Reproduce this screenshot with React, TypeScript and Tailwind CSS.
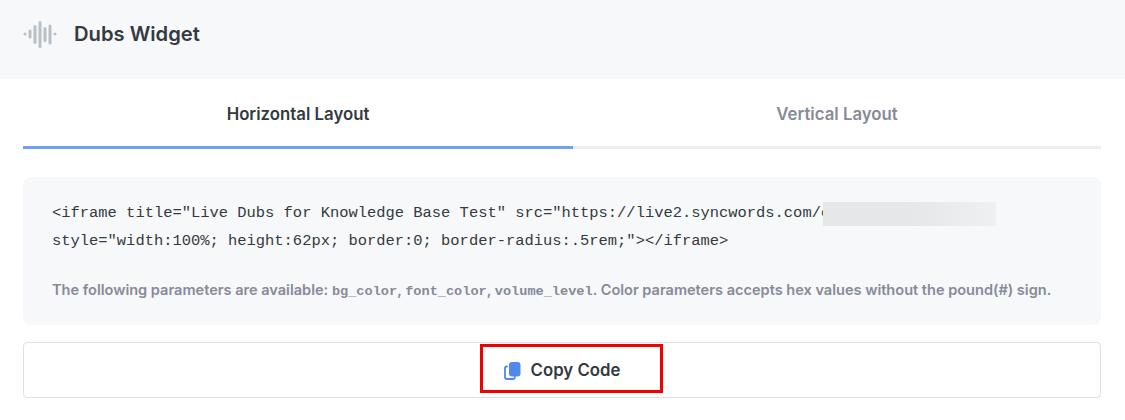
export default function App() {
  return (
    <div className="relative h-[420px] w-[1125px] overflow-hidden bg-white font-['Inter',sans-serif]">
      <header className="flex h-[79px] items-center gap-[17px] bg-[#f7f8fa] pb-[12px] pl-[23px]">
        <svg width="34" height="28" viewBox="0 0 34 28" fill="none" stroke="#b8bfc7" strokeWidth="3" strokeLinecap="round">
          <path d="M2 14v.1M7 11v6M12 6.500v16M17 2.500v24M22 8.500v12M27 6v17M32 14v.1" />
        </svg>
        <h1 className="text-[20.2px] font-semibold leading-7 text-[#343a40]">Dubs Widget</h1>
      </header>
      <main className="ml-[23px] w-[1078px]">
        <div className="grid h-[70px] grid-cols-[550px_1fr]">
          <div className="flex items-center justify-center border-b-[3px] border-[#6ea2f2] pt-[5px] text-[16.8px] font-semibold text-[#343a40]">Horizontal Layout</div>
          <div className="flex items-center justify-center border-b-[3px] border-[#eeeeee] pt-[5px] text-[16.8px] font-semibold text-[#878a99]">Vertical Layout</div>
        </div>
        <section className="relative mt-[28px] h-[148px] rounded-lg bg-[#f7f8fa] pl-[29px] pt-[22px]">
          <code className="block font-['Liberation_Mono',monospace] text-[15.45px] leading-[28px] whitespace-pre text-[#343a40]">
            {'<iframe title="Live Dubs for Knowledge Base Test" src="https://live2.syncwords.com/c\nstyle="width:100%; height:62px; border:0; border-radius:.5rem;"></iframe>'}
          </code>
          <p className="mt-[25px] text-[14.56px] font-semibold leading-5 whitespace-pre text-[#878a99]">
            The following parameters are available: <code className="font-['Liberation_Mono',monospace] text-[13.6px] font-bold">bg_color</code>, <code className="font-['Liberation_Mono',monospace] text-[13.6px] font-bold">font_color</code>, <code className="font-['Liberation_Mono',monospace] text-[13.6px] font-bold">volume_level</code>. Color parameters accepts hex values without the pound(#) sign.
          </p>
          <div className="absolute left-[800px] top-[25px] h-[24px] w-[173px] bg-gradient-to-r from-[#e6e7e9] via-[#e6e7e9] to-[#eff0f2]" />
        </section>
        <button className="mt-[17px] flex h-[56px] w-full items-center justify-center gap-[10px] rounded border border-[#dfe1e5] bg-white pt-[1px] text-[16.8px] font-semibold text-[#343a40]">
          <svg width="17" height="18" viewBox="0 0 17 18">
            <rect x="5" y="0" width="11.500" height="14.500" rx="3" fill="#4f8aee" />
            <path d="M3 4.500H2.800C1.800 4.500 1 5.300 1 6.300V15c0 1.100.9 2 2 2h6c1 0 1.800-.8 1.800-1.800v-.2" fill="none" stroke="#4f8aee" strokeWidth="1.800" strokeLinecap="round" />
          </svg>
          Copy Code
        </button>
      </main>
      <div className="absolute left-[480px] top-[344px] h-[49px] w-[183px] border-[3px] border-[#f00000]" />
    </div>
  );
}
